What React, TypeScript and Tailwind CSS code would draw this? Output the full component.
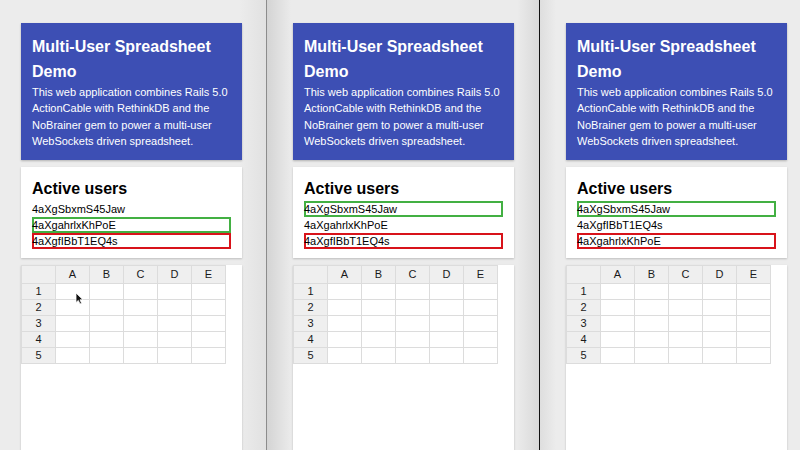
import React from 'react';

type Mark = 'green' | 'red' | null;

const panes: {
  users: { id: string; mark: Mark }[];
  bg: string;
  cursor?: boolean;
}[] = [
  {
    users: [
      { id: '4aXgSbxmS45Jaw', mark: null },
      { id: '4aXgahrlxKhPoE', mark: 'green' },
      { id: '4aXgfIBbT1EQ4s', mark: 'red' },
    ],
    bg: 'w-[266px] pl-[21px] bg-[linear-gradient(to_right,#ececec_90%,#e1e1e1)]',
    cursor: true,
  },
  {
    users: [
      { id: '4aXgSbxmS45Jaw', mark: 'green' },
      { id: '4aXgahrlxKhPoE', mark: null },
      { id: '4aXgfIBbT1EQ4s', mark: 'red' },
    ],
    bg: 'w-[272px] pl-[26px] bg-[linear-gradient(to_right,#d4d4d4,#ebebeb_24px,#ebebeb_92%,#d9d9d9)]',
  },
  {
    users: [
      { id: '4aXgSbxmS45Jaw', mark: 'green' },
      { id: '4aXgfIBbT1EQ4s', mark: null },
      { id: '4aXgahrlxKhPoE', mark: 'red' },
    ],
    bg: 'flex-1 pl-[26px] bg-[linear-gradient(to_right,#dedede,#ececec_16px)]',
  },
];

const cols = ['A', 'B', 'C', 'D', 'E'];
const rows = [1, 2, 3, 4, 5];

function UserRow({ id, mark }: { id: string; mark: Mark }) {
  // the highlight box is drawn over the text, it doesn't push it in
  const box =
    mark === 'green'
      ? 'shadow-[inset_0_0_0_2px_#43b043]'
      : mark === 'red'
        ? 'shadow-[inset_0_0_0_2px_#d8131a]'
        : '';
  return <div className={`h-[16px] leading-[16px] ${box}`}>{id}</div>;
}

function Pane({ p }: { p: (typeof panes)[number] }) {
  return (
    <div className={`relative h-full shrink-0 pt-[23px] ${p.bg}`}>
      <div className="w-[221px] bg-[#3d4fb4] px-[11px] pt-[11px] pb-[11px] text-white shadow-[0_1px_2px_rgba(0,0,0,0.25)]">
        <h1 className="text-[16px] font-bold leading-[25px]">Multi-User Spreadsheet Demo</h1>
        <p className="text-[11px] leading-[16.3px]">
          This web application combines Rails 5.0 ActionCable with RethinkDB and the NoBrainer gem to power a
          multi-user WebSockets driven spreadsheet.
        </p>
      </div>

      <div className="mt-[7px] w-[221px] bg-white px-[11px] pt-[10px] pb-[9px] text-black shadow-[0_1px_2px_rgba(0,0,0,0.2)]">
        <h2 className="text-[16px] font-bold leading-[24px]">Active users</h2>
        <div className="text-[11px]">
          {p.users.map((u) => (
            <UserRow key={u.id} id={u.id} mark={u.mark} />
          ))}
        </div>
      </div>

      <div className="mt-[7px] h-[200px] w-[221px] bg-white shadow-[0_1px_2px_rgba(0,0,0,0.2)]">
        <table className="border-collapse text-[11px] text-[#1a1a1a]">
          <thead>
            <tr className="h-[17px]">
              <th className="w-[34px] border border-[#dcdcdc] bg-[#efefef] p-0 font-normal"></th>
              {cols.map((c) => (
                <th key={c} className="w-[34px] border border-[#dcdcdc] bg-[#efefef] p-0 font-normal">
                  {c}
                </th>
              ))}
            </tr>
          </thead>
          <tbody>
            {rows.map((r) => (
              <tr key={r} className="h-[16px]">
                <td className="border border-[#dcdcdc] bg-[#efefef] p-0 text-center leading-[13px]">{r}</td>
                {cols.map((c) => (
                  <td key={c} className="border border-[#dcdcdc] p-0"></td>
                ))}
              </tr>
            ))}
          </tbody>
        </table>
      </div>

      {p.cursor && (
        <svg className="absolute left-[75px] top-[292px]" width="9" height="13" viewBox="0 0 9 13">
          <path d="M1 1 L1 10.5 L3.3 8.4 L5 12 L6.6 11.3 L5 7.8 L8 7.8 Z" fill="#111" stroke="#fff" strokeWidth="0.8" />
        </svg>
      )}
    </div>
  );
}

export default function App() {
  return (
    <div className="flex h-[450px] w-[800px] overflow-hidden font-['Liberation_Sans',Arial,sans-serif]">
      <Pane p={panes[0]} />
      <div className="h-full w-px shrink-0 bg-[#8c8c8c]" />
      <Pane p={panes[1]} />
      <div className="h-full w-px shrink-0 bg-[#111]" />
      <Pane p={panes[2]} />
    </div>
  );
}
